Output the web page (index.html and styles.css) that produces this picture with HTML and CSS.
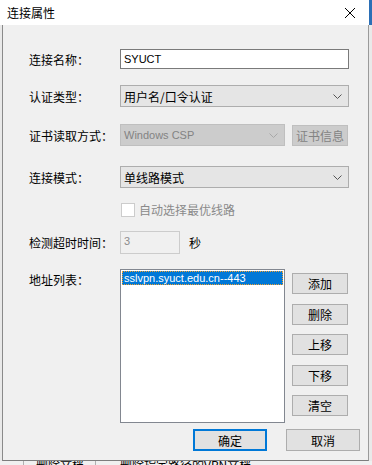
FILE: index.html
```html
<!DOCTYPE html>
<html lang="zh-CN">
<head>
  <meta charset="UTF-8">
  <title>连接属性</title>
  <link rel="stylesheet" href="styles.css">
</head>
<body>
  <div class="dialog">
    <div class="titlebar">
      <span class="title">连接属性</span>
      <svg class="close" width="12" height="12" viewBox="0 0 12 12">
        <path d="M1 1 L11 11 M11 1 L1 11" stroke="#000" stroke-width="1" fill="none"/>
      </svg>
      <div class="edge"></div>
    </div>

    <div class="panel">
      <div class="row r-name">
        <label>连接名称：</label>
        <div class="input wide latin">SYUCT</div>
      </div>

      <div class="row r-auth">
        <label>认证类型：</label>
        <div class="select wide">
          <span>用户名/口令认证</span>
          <svg class="chev" width="9" height="5" viewBox="0 0 9 5"><path d="M0.5 0.5 L4.5 4.5 L8.5 0.5" stroke="#555" fill="none"/></svg>
        </div>
      </div>

      <div class="row r-cert">
        <label>证书读取方式：</label>
        <div class="select narrow disabled">
          <span class="latin">Windows CSP</span>
          <svg class="chev" width="9" height="5" viewBox="0 0 9 5"><path d="M0.5 0.5 L4.5 4.5 L8.5 0.5" stroke="#a8a8a8" fill="none"/></svg>
        </div>
        <button class="btn side disabled">证书信息</button>
      </div>

      <div class="row r-mode">
        <label>连接模式：</label>
        <div class="select wide">
          <span>单线路模式</span>
          <svg class="chev" width="9" height="5" viewBox="0 0 9 5"><path d="M0.5 0.5 L4.5 4.5 L8.5 0.5" stroke="#555" fill="none"/></svg>
        </div>
      </div>

      <div class="row r-check">
        <label></label>
        <span class="checkbox"></span>
        <span class="check-text">自动选择最优线路</span>
      </div>

      <div class="row r-time">
        <label>检测超时时间：</label>
        <div class="input short disabled latin">3</div>
        <span class="unit">秒</span>
      </div>

      <div class="row r-list">
        <label class="top">地址列表：</label>
        <div class="listbox">
          <div class="item latin">sslvpn.syuct.edu.cn--443</div>
        </div>
        <div class="side-buttons">
          <button class="btn side">添加</button>
          <button class="btn side">删除</button>
          <button class="btn side">上移</button>
          <button class="btn side">下移</button>
          <button class="btn side">清空</button>
        </div>
      </div>

      <div class="footer">
        <button class="btn wide-btn default">确定</button>
        <button class="btn wide-btn">取消</button>
      </div>
    </div>
  </div>

  <div class="under">
    <div class="cell first">删除文档</div>
    <div class="cell second">删除指定路径的VPN文档</div>
  </div>
</body>
</html>
```

FILE: styles.css
```css
* {
  margin: 0; padding: 0; box-sizing: border-box;
  font-family: 'Noto Sans CJK SC', sans-serif;
}
html, body {
  width: 372px;
  height: 465px;
  overflow: hidden;
}
body {
  background: #e9e9e9;
  font-size: 12px;
  color: #000;
}
.latin {
  font-family: 'Liberation Sans', 'Noto Sans CJK SC', sans-serif;
  font-size: 11px;
}

/* window */
.dialog {
  width: 372px;
}
.titlebar {
  height: 25px;
  display: flex;
  align-items: center;
  background: #fff;
  padding-left: 7px;
}
.title {
  font-size: 12px;
  flex-grow: 1;
}
.close {
  margin-right: 13px;
}
.edge {
  width: 3px;
  height: 25px;
  background: #2b6fb6;
}
.panel {
  width: 367px;
  height: 436px;
  margin-left: 2px;
  background: #f0f0f0;
  border-left: 1px solid #8a8a8a;
  border-right: 1px solid #9a9a9a;
  border-bottom: 1px solid #7d7d7d;
  padding: 24px 0 0 26px;
  display: flex;
  flex-direction: column;
}

/* rows */
.row {
  display: flex;
  align-items: center;
}
.row label {
  width: 91px;
  flex-shrink: 0;
}
.row label.top {
  align-self: flex-start;
  padding-top: 2px;
}
.r-auth { margin-top: 16px; }
.r-cert { margin-top: 17px; }
.r-mode { margin-top: 20px; }
.r-check {
  margin-top: 15px;
  height: 14px;
  line-height: 14px;
}
.r-time { margin-top: 14px; }
.r-list { margin-top: 15px; align-items: flex-start; }

.input {
  height: 20px;
  background: #fff;
  border: 1px solid #7a7a7a;
  padding-left: 3px;
  display: flex;
  align-items: center;
}
.input.wide { width: 229px; }
.input.short {
  width: 60px;
  height: 23px;
  border-color: #cccccc;
  background: #f0f0f0;
  color: #8c8c8c;
  align-items: flex-start;
  padding-top: 3px;
}
.unit { margin-left: 9px; }

.select {
  height: 22px;
  background: #e5e5e5;
  border: 1px solid #adadad;
  display: flex;
  align-items: center;
  justify-content: space-between;
  padding: 0 6px 0 3px;
}
.select.wide { width: 229px; }
.select.narrow { width: 165px; }
.select.disabled {
  background: #cccccc;
  border-color: #bfbfbf;
  color: #838383;
}
.chev { margin-top: 1px; }

.checkbox {
  width: 14px;
  height: 14px;
  background: #fff;
  border: 1px solid #cccccc;
  margin-left: 1px;
}
.check-text {
  margin-left: 4px;
  color: #8a8a8a;
}

/* buttons */
.btn {
  height: 21px;
  background: #e1e1e1;
  border: 1px solid #adadad;
  font-size: 12px;
  color: #000;
  display: flex;
  align-items: center;
  justify-content: center;
}
.btn.side {
  width: 56px;
}
.r-cert .btn.side {
  margin-left: 7px;
  height: 21px;
}
.btn.disabled {
  background: #cccccc;
  border-color: #bfbfbf;
  color: #838383;
}
.side-buttons {
  margin-left: 7px;
  padding-top: 4px;
  display: flex;
  flex-direction: column;
  gap: 9.5px;
}

.listbox {
  width: 165px;
  height: 154px;
  background: #fff;
  border: 1px solid #828790;
  padding: 1px;
}
.item {
  height: 14px;
  background: #0078d7;
  color: #fff;
  border: 1px dotted #f0a030;
  line-height: 12px;
  padding-left: 1px;
}

.footer {
  margin-top: 6px;
  padding-left: 164px;
  display: flex;
  gap: 19px;
}
.btn.wide-btn {
  width: 74px;
  height: 22px;
}
.btn.default {
  border: 2px solid #0078d7;
}

/* window underneath */
.under {
  height: 4px;
  display: flex;
  overflow: hidden;
  background: #f0f0f0;
}
.cell {
  font-size: 12px;
  line-height: 12px;
  margin-top: -2px;
  border-left: 1px solid #b0b0b0;
  padding-left: 12px;
  overflow: hidden;
  white-space: nowrap;
}
.cell.first { margin-left: 23px; width: 72px; }
.cell.second { width: 200px; padding-left: 24px; }
```
